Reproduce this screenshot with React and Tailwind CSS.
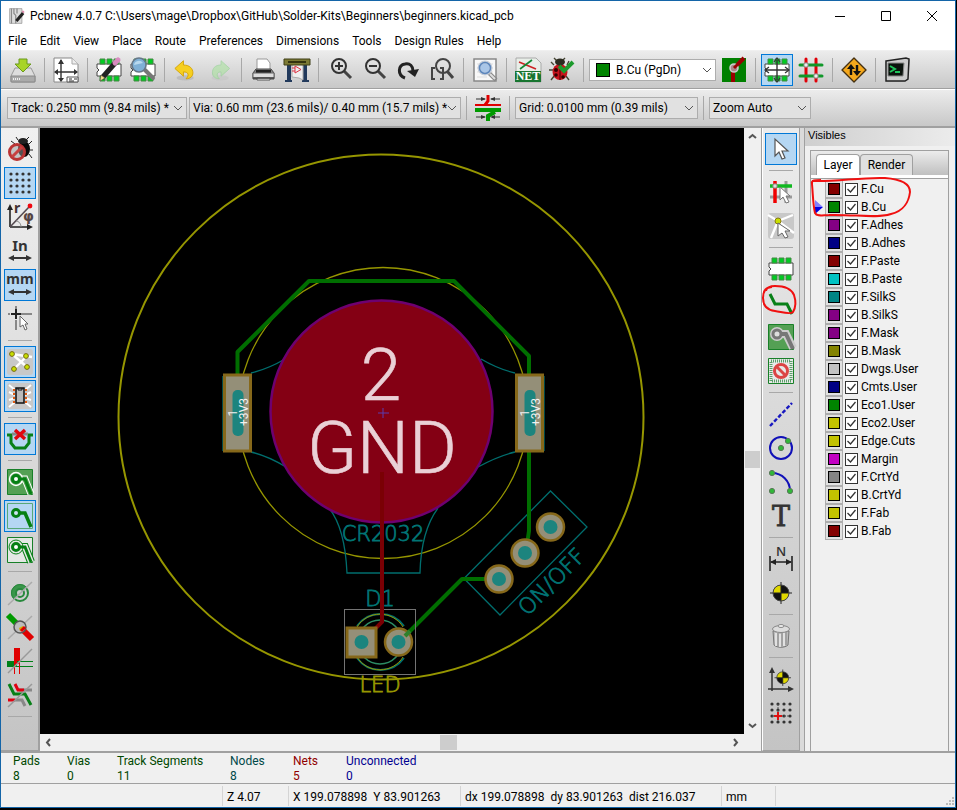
import { useState } from 'react';

const Icon = ({ children, size = 26 }) => (
    <svg width={size} height={size} viewBox="0 0 26 26" fill="none" aria-hidden="true" className="shrink-0 overflow-visible">
        {children}
    </svg>
);

/* Pieces shared by several icons */
const Chip = () => (
    <>
        <path d="M1 7h24v12H1v-4l2-2-2-2z" fill="#fff" stroke="#444" />
        <path d="M4 2h5v5H4zM11 2h5v5h-5zM18 2h5v5h-5zM4 19h5v5H4zM11 19h5v5h-5zM18 19h5v5h-5z" fill="#0c2" stroke="#484" />
    </>
);

const Magnifier = () => (
    <>
        <path d="M17 14l7 7" stroke="#444" strokeWidth="3" />
        <circle cx="12" cy="9" r="7" stroke="#333" strokeWidth="2" />
    </>
);

const Arrow = () => <path d="M7 3v17l4-4 3 7 3-1-3-7h6z" fill="#fff" stroke="#555" strokeWidth="1.2" />;

const Target = () => (
    <>
        <circle cx="13" cy="13" r="8" fill="#111" />
        <path d="M13 13V5a8 8 0 0 0-8 8zM13 13v8a8 8 0 0 0 8-8z" fill="#e0d800" />
        <path d="M13 2v22M2 13h22" stroke="#222" />
        <circle cx="13" cy="13" r="8" stroke="#444" />
    </>
);

const GridDots = () =>
    [4, 10, 16, 22].map((y) => [4, 10, 16, 22].map((x) => <circle key={`${x}-${y}`} cx={x} cy={y} r="1.6" fill="#333" />));

const DoubleArrow = () => (
    <path d="M1 20l6-3v2h12v-2l6 3-6 3v-2H7v2z" fill="#333" />
);

const icons = {
    save: (
        <>
            <path d="M5 11h16l4 8v6H1v-6z" fill="#ddd" stroke="#999" />
            <path d="M1 19h24v5a1 1 0 0 1-1 1H2a1 1 0 0 1-1-1z" fill="#aaa" stroke="#888" />
            <path d="M3 22h8" stroke="#eee" strokeDasharray="1 1" strokeWidth="2" />
            <path d="M9 2h8v5h4l-8 8-8-8h4z" fill="#a8d428" stroke="#6a9a1c" />
        </>
    ),
    page: (
        <>
            <path d="M1 1h18l6 6v18H1z" fill="#fff" stroke="#888" />
            <path d="M19 1v6h6" stroke="#aaa" fill="#eee" />
            <path d="M8 3v21M2 15h22" stroke="#333" strokeWidth="1.4" />
            <path d="M8 2l-3 5h6zM8 25l-3-4h6zM1 15l4-3v6zM25 15l-4-3v6z" fill="#333" />
            <path d="M14 20h11v5H14z" fill="#fff" stroke="#555" />
            <path d="M16 22h3m2 0h3M16 24h5" stroke="#333" />
        </>
    ),
    edit: (
        <>
            <Chip />
            <path d="M6 21L20 5" stroke="#222" strokeWidth="5" />
            <path d="M19 6l3-3" stroke="#d88abf" strokeWidth="5" strokeLinecap="round" />
            <path d="M4 24l1-6 4 3z" fill="#f4e08a" stroke="#544" strokeWidth=".6" />
        </>
    ),
    view: (
        <>
            <Chip />
            <path d="M15 13l8 8" stroke="#777" strokeWidth="4" strokeLinecap="round" />
            <circle cx="9" cy="8" r="7" fill="#7fb0d6" stroke="#678" strokeWidth="1.6" />
            <path d="M4 8a5 5 0 0 1 9-2z" fill="#b8d8ee" />
        </>
    ),
    undo: (
        <g transform="translate(1 2) scale(.86)">
            <ellipse cx="13" cy="22" rx="10" ry="3" fill="#999" opacity=".35" />
            <path d="M1 11l10-9v5c7 0 11 4 11 9 0 4-3 7-8 7 4-4 3-8-3-8v5z" fill="#f6cf20" stroke="#d2a000" />
        </g>
    ),
    redo: (
        <g opacity=".55" transform="translate(2 2) scale(.86)">
            <ellipse cx="13" cy="22" rx="10" ry="3" fill="#aaa" opacity=".3" />
            <path d="M24 11L14 2v5C7 7 4 11 4 16c0 4 3 7 8 7-4-4-3-8 2-8v5z" fill="#a6e39a" stroke="#7fce80" />
        </g>
    ),
    print: (
        <>
            <path d="M7 2h10l3 4v8H7z" fill="#fff" stroke="#999" />
            <path d="M6 12h15l3 4v6H3v-6z" fill="#888" stroke="#444" />
            <path d="M6 13h15v3H6z" fill="#222" />
            <path d="M3 16h21v5H3z" fill="#ddd" stroke="#666" />
            <path d="M7 21h13v2H7z" fill="#f8f8f8" stroke="#555" />
            <path d="M3 21h21" stroke="#444" strokeWidth="1.5" />
        </>
    ),
    plot: (
        <>
            <path d="M3 7h4v16h1v2H1v-2h2zM19 7h4v16h2v2h-7v-2h1z" fill="#223a5c" />
            <path d="M8 7h11v16l-4-2-7-1z" fill="#eee" stroke="#aaa" />
            <path d="M0 2h26v6H0z" fill="#7c7a34" stroke="#3f3e17" />
            <path d="M4 5h18" stroke="#34330f" strokeWidth="2" />
            <path d="M8 11h3M8 14h3M11 9v7l6-3.500z" stroke="#d34" />
        </>
    ),
    zoomIn: (
        <>
            <Magnifier />
            <path d="M12 5v8M8 9h8" stroke="#333" strokeWidth="2" />
        </>
    ),
    zoomOut: (
        <>
            <Magnifier />
            <path d="M8 9h8" stroke="#333" strokeWidth="2" />
        </>
    ),
    redraw: (
        <>
            <path d="M10 21C2 18 3 8 10 7c5-1 8 2 8 7" stroke="#222" strokeWidth="3" />
            <path d="M12 14l12-2-4 8z" fill="#222" />
        </>
    ),
    fit: (
        <>
            <path d="M6 11H3v11h3M11 11h3v11h-3" stroke="#444" strokeWidth="2" />
            <circle cx="14" cy="9" r="7" stroke="#444" strokeWidth="2" />
            <path d="M18 14l6 7" stroke="#444" strokeWidth="3" />
        </>
    ),
    find: (
        <>
            <path d="M2 2h22v22H2z" fill="#f8f8f8" stroke="#888" strokeWidth="1.5" />
            <path d="M5 7h16M5 11h16M5 15h16M5 20h10" stroke="#ddd" />
            <path d="M17 16l7 7" stroke="#888" strokeWidth="4" />
            <path d="M18 17l5 5" stroke="#ddd" strokeWidth="2" />
            <circle cx="13" cy="11" r="6" fill="#a9c6e8" stroke="#c4ccd8" strokeWidth="3" />
            <circle cx="13" cy="11" r="5.5" stroke="#5b86bd" strokeWidth="1.5" />
        </>
    ),
    net: (
        <>
            <path d="M1 1h20l5 5v19H1z" fill="#e8eee8" stroke="#aaa" />
            <path d="M4 5l17 7" stroke="#c22" strokeWidth="1.6" />
            <path d="M5 12l12-9" stroke="#183" strokeWidth="1.6" />
            <path d="M0 14h26v11H0z" fill="#187530" />
            <text x="13" y="23" textAnchor="middle" fill="#fff" className="font-['Liberation_Serif',serif] text-[12px] font-bold">NET</text>
        </>
    ),
    bug: (
        <>
            <path d="M5 8L2 5M5 13H0M6 18l-4 5M18 8l2-4M17 19l3 4M8 4L5 1M13 4l3-3" stroke="#443" strokeWidth="1.4" />
            <ellipse cx="11" cy="15" rx="7.5" ry="8" fill="#c8131c" />
            <ellipse cx="11" cy="5" rx="5" ry="3.5" fill="#2b2b1f" />
            <path d="M11 8v15" stroke="#400" />
            <circle cx="7" cy="13" r="2" fill="#300" />
            <circle cx="7" cy="18" r="1.8" fill="#300" />
            <circle cx="14" cy="20" r="1.8" fill="#300" />
            <path d="M10 9l5 5 9-9" stroke="#1c9a2c" strokeWidth="4" />
        </>
    ),
    layerPair: (
        <>
            <path d="M1 1h24v24H1z" fill="#008000" />
            <path d="M12 25V12L23 1" stroke="#900" strokeWidth="4" />
            <circle cx="13" cy="11" r="4" fill="#a88" stroke="#ccc" strokeWidth="1.6" />
            <path d="M13 11l8-8" stroke="#900" strokeWidth="3" />
        </>
    ),
    modeFootprint: (
        <>
            <Chip />
            <path d="M9 8h8v10H9z" fill="#fff" />
            <path d="M13 3v20M2 13h22" stroke="#333" strokeWidth="1.4" />
            <path d="M10 5l3-4 3 4M10 21l3 4 3-4M5 10l-4 3 4 3M21 10l4 3-4 3" stroke="#333" strokeWidth="1.2" />
        </>
    ),
    modeTrack: (
        <>
            <path d="M8 2v22M18 2v22" stroke="#e00008" strokeWidth="3" strokeLinecap="round" />
            <path d="M2 8h22M2 19h22" stroke="#11982a" strokeWidth="3" strokeLinecap="round" />
            <circle cx="8" cy="8" r="2.2" fill="#eee" stroke="#888" />
            <circle cx="18" cy="19" r="2.2" fill="#eee" stroke="#888" />
        </>
    ),
    router: (
        <>
            <path d="M13 1l12 12-12 12L1 13z" fill="#f5a81c" stroke="#443010" strokeWidth="1.4" strokeLinejoin="round" />
            <path d="M10 18V11M16 8v7" stroke="#111" strokeWidth="2.4" />
            <path d="M10 7l-4 5h8zM16 19l-4-5h8z" fill="#111" />
        </>
    ),
    console: (
        <>
            <path d="M1 5l21-4 4 2-2 19-4 3H2z" fill="#bbb" />
            <path d="M2 4l20-3 3 1-1 20-3 2H2z" fill="#ccc" stroke="#222" strokeWidth="1.5" />
            <path d="M4 6h16l-1 13H4z" fill="#0b130d" stroke="#888" />
            <path d="M6 9l5 3-5 3M11 15h5" stroke="#1fc45a" strokeWidth="2" />
        </>
    ),
    trackWidth: (
        <>
            <path d="M13 0v6l-3 4" stroke="#e00000" strokeWidth="3" />
            <path d="M0 10h26" stroke="#e00000" strokeWidth="2" />
            <path d="M0 15h26" stroke="#009a00" strokeWidth="4" />
            <path d="M20 17l-7 4v5" stroke="#009a00" strokeWidth="4" />
            <path d="M1 4h9M16 4h9M1 22h9M17 22h8" stroke="#333" />
            <path d="M11 4L6 2v4zM15 4l5-2v4zM11 22l-5-2v4zM15 22l5-2v4z" fill="#333" />
        </>
    ),
    drcOff: (
        <>
            <path d="M11 4L9 1M19 4l3-3M22 8l3-3M23 14h3M22 18l3 4M8 8L4 5" stroke="#222" />
            <ellipse cx="17" cy="13" rx="6" ry="8" fill="#080808" />
            <ellipse cx="16" cy="5" rx="5" ry="3" fill="#222" />
            <circle cx="10" cy="16" r="7.5" fill="#999" fillOpacity=".5" stroke="#b93434" strokeWidth="3" />
            <path d="M5 21L15 11" stroke="#c84040" strokeWidth="3" />
        </>
    ),
    grid: <GridDots />,
    polar: (
        <>
            <path d="M3 23V4M3 23h19" stroke="#222" strokeWidth="1.6" />
            <path d="M3 0L0 6h6zM26 23l-6-3v6z" fill="#222" />
            <path d="M3 23L22 3" stroke="#544a50" strokeWidth="1.6" />
            <circle cx="23" cy="2" r="2.4" fill="#f00810" />
            <path d="M9 17c3 0 5 3 5 6" stroke="#888" />
            <text x="7" y="9" fill="#433" className="font-['Noto_Sans',sans-serif] text-[14px] font-bold">r</text>
            <text x="16" y="17" fill="#544" className="font-['DejaVu_Sans',sans-serif] text-[14px] font-bold">φ</text>
        </>
    ),
    inch: (
        <>
            <text x="13" y="13" textAnchor="middle" fill="#333" className="font-['Noto_Sans',sans-serif] text-[15px] font-bold">In</text>
            <DoubleArrow />
        </>
    ),
    mm: (
        <>
            <text x="13" y="12" textAnchor="middle" fill="#333" className="font-['Noto_Sans',sans-serif] text-[14px] font-bold">mm</text>
            <DoubleArrow />
        </>
    ),
    cursor: (
        <>
            <path d="M9 0v4M9 14v10M1 8h2M14 8h11" stroke="#888" strokeWidth="2" />
            <path d="M9 3v10M4 8h10" stroke="#222" strokeWidth="2" />
            <path d="M13 10v11l3-2 2 5 2-1-2-5h3z" fill="#fff" stroke="#666" />
        </>
    ),
    ratsnest: (
        <>
            <rect width="26" height="26" rx="3" fill="#c8c8c8" />
            <path d="M5 5l20 3M5 5l15 13M7 20L20 7" stroke="#fff" strokeWidth="2.4" />
            <g fill="#c8e000" stroke="#776a10">
                <circle cx="5" cy="5" r="2.4" />
                <circle cx="19" cy="7" r="2.4" />
                <circle cx="7" cy="20" r="2.4" />
                <circle cx="20" cy="18" r="2.4" />
            </g>
        </>
    ),
    moduleRatsnest: (
        <>
            <rect width="26" height="26" rx="3" fill="#c8c8c8" />
            <path d="M2 2l6 5M2 9l6 3M2 17l6-2M2 24l6-5M24 2l-6 5M24 9l-6 3M24 17l-6-2M24 24l-6-5" stroke="#fff" strokeWidth="2" />
            <path d="M9 5h8v15H9z" fill="#bbb" stroke="#111" strokeWidth="1.5" />
            <path d="M7 6v14M19 6v14" stroke="#e05a10" strokeWidth="2" strokeDasharray="2 2" />
            <path d="M11 5v2h4V5" stroke="#111" />
        </>
    ),
    autoDelete: (
        <>
            <path d="M0 9h4v8l4 5h10l4-5V9h4" stroke="#088018" strokeWidth="3" />
            <path d="M5 8h16" stroke="#888" strokeWidth="3" />
            <path d="M8 4l10 9M18 4L8 13" stroke="#e00810" strokeWidth="3.5" />
        </>
    ),
    zoneFilled: (
        <>
            <path d="M.5.5h25v25H.5z" fill="#54a054" stroke="#188028" />
            <path d="M9 10h9l6 15" stroke="#fff" strokeWidth="7" />
            <path d="M9 10h9l6 15" stroke="#54a054" strokeWidth="5" />
            <circle cx="9" cy="10" r="6.5" fill="#54a054" stroke="#fff" strokeWidth="1.4" />
            <path d="M9 10h9l6 15" stroke="#068014" strokeWidth="3" />
            <circle cx="9" cy="10" r="3.5" fill="#fff" stroke="#068014" strokeWidth="3" />
        </>
    ),
    zoneHidden: (
        <>
            <path d="M.5.5h25v25H.5z" stroke="#58a878" />
            <path d="M9 10h9l6 14" stroke="#068014" strokeWidth="3.5" />
            <circle cx="9" cy="10" r="3.5" fill="#cde3f2" stroke="#068014" strokeWidth="3" />
        </>
    ),
    zoneOutline: (
        <>
            <path d="M.5.5h25v25H.5z" fill="#e4e8e4" stroke="#188028" />
            <path d="M9 10h9l6 15" stroke="#068014" strokeWidth="8" />
            <path d="M9 10h9l6 15" stroke="#e4e8e4" strokeWidth="6" />
            <circle cx="9" cy="10" r="7" fill="#e4e8e4" stroke="#068014" />
            <path d="M9 10h9l6 15" stroke="#068014" strokeWidth="3" />
            <circle cx="9" cy="10" r="3.5" fill="#fff" stroke="#068014" strokeWidth="3" />
        </>
    ),
    padSketch: (
        <>
            <circle cx="13" cy="13" r="8" stroke="#28883c" strokeWidth="2" />
            <path d="M7 19A8 8 0 0 1 19 7z" fill="#3a964a" stroke="#28883c" />
            <circle cx="13" cy="13" r="4" fill="#ccc" stroke="#28883c" strokeWidth="2" />
            <path d="M1 25L25 2" stroke="#aaa" strokeWidth="1.5" />
        </>
    ),
    viaSketch: (
        <>
            <path d="M1 1l9 9" stroke="#009a00" strokeWidth="6" />
            <path d="M14 14l11 11" stroke="#e00000" strokeWidth="6" />
            <path d="M1 25L25 2" stroke="#aaa" strokeWidth="1.5" />
            <circle cx="13" cy="13" r="6" fill="#bbb" fillOpacity=".9" stroke="#555" strokeWidth="1.5" />
            <path d="M12 14l4-2v4l-3 1z" fill="#d0b000" />
            <path d="M14 17l4-4" stroke="#e00000" strokeWidth="3" />
        </>
    ),
    trackSketch: (
        <>
            <path d="M0 16h10" stroke="#008018" strokeWidth="6" />
            <path d="M10 0v16" stroke="#e00000" strokeWidth="6" />
            <path d="M10 13.500h16M10 18.500h16" stroke="#008018" />
            <path d="M7.500 16v10M12.500 16v10" stroke="#e00000" />
            <path d="M1 25L25 1" stroke="#999" strokeWidth="1.5" />
        </>
    ),
    contrast: (
        <>
            <path d="M12 8h13" stroke="#888" strokeWidth="3" />
            <path d="M8 2l3 6h6" stroke="#e00010" strokeWidth="3" />
            <path d="M8 18h7l3 6" stroke="#888" strokeWidth="3" />
            <path d="M1 18h7" stroke="#e00010" strokeWidth="3" />
            <path d="M2 2l5 10h11l6 11" stroke="#088018" strokeWidth="3" />
            <path d="M1 25L25 2" stroke="#999" strokeWidth="1.5" />
        </>
    ),
    select: <Arrow />,
    highlight: (
        <>
            <path d="M18 2v22M2 18h22" stroke="#999" strokeWidth="3" />
            <path d="M7 2v22" stroke="#f00000" strokeWidth="3.5" />
            <path d="M2 7h22" stroke="#10b820" strokeWidth="3.5" />
            <circle cx="7" cy="7" r="2.2" fill="#ddd" stroke="#888" />
            <path d="M12 8v13l3-3 3 6 3-1-3-6h4z" fill="#fff" stroke="#777" />
        </>
    ),
    localRatsnest: (
        <>
            <rect width="26" height="26" rx="3" fill="#c8c8c8" />
            <path d="M10 8L0 2M10 8l15-6M10 8L3 25M10 8l16 12" stroke="#fff" strokeWidth="2.4" />
            <circle cx="10" cy="8" r="3" fill="#c8e000" stroke="#887a10" />
            <path d="M10 10v13l4-3 3 5 3-1-3-6h5z" fill="#fff" stroke="#666" />
        </>
    ),
    footprint: <Chip />,
    route: <path d="M2 4l5 10h12l5 10" stroke="#088018" strokeWidth="3" />,
    zone: (
        <>
            <path d="M.5.5h25v25H.5z" fill="#54a054" stroke="#188028" />
            <path d="M9 10h9l7 14" stroke="#ccc" strokeWidth="8" />
            <circle cx="9" cy="10" r="7" fill="#ccc" />
            <path d="M9 10h9l7 15" stroke="#777" strokeWidth="4" />
            <circle cx="9" cy="10" r="4" fill="#ddd" stroke="#777" strokeWidth="3" />
        </>
    ),
    keepout: (
        <>
            <path d="M.5.5h25v25H.5z" fill="#e8e8e8" stroke="#188028" />
            <path d="M3 3h20v20H3z" stroke="#58a068" strokeWidth="3" strokeDasharray="1 1" />
            <circle cx="13" cy="13" r="6.5" stroke="#dc4444" strokeWidth="3" />
            <path d="M9 9l8 8" stroke="#dc4444" strokeWidth="3" />
        </>
    ),
    line: <path d="M2 25L24 2" stroke="#1818c0" strokeWidth="2.4" strokeDasharray="4 2" />,
    circle: (
        <>
            <circle cx="13" cy="13" r="11" stroke="#1010b8" strokeWidth="2" />
            <circle cx="13" cy="13" r="2.6" fill="#30b838" stroke="#587858" />
            <circle cx="20" cy="6" r="2.6" fill="#30b838" stroke="#587858" />
        </>
    ),
    arc: (
        <>
            <path d="M4 4c10 0 18 8 18 18" stroke="#1010b8" strokeWidth="2" />
            <circle cx="4" cy="4" r="2.6" fill="#30b838" stroke="#587858" />
            <circle cx="4" cy="22" r="2.6" fill="#30b838" stroke="#587858" />
            <circle cx="22" cy="22" r="2.6" fill="#30b838" stroke="#587858" />
        </>
    ),
    text: <text x="13" y="23" textAnchor="middle" fill="#333" stroke="#333" strokeWidth=".8" className="font-['DejaVu_Serif',serif] text-[27px]">T</text>,
    dimension: (
        <>
            <text x="13" y="10" textAnchor="middle" fill="#333" className="font-['Open_Sans',sans-serif] text-[13px] font-semibold">N</text>
            <path d="M2 10v15M24 10v15M3 16h20" stroke="#222" strokeWidth="1.6" />
            <path d="M2 16l6-3v6zM24 16l-6-3v6z" fill="#222" />
        </>
    ),
    target: <Target />,
    trash: (
        <>
            <path d="M5 8l1 14c3 3 11 3 14 0l1-14z" fill="#bbb" stroke="#777" />
            <path d="M8 10v13M12 11v13M16 10v13" stroke="#eee" strokeWidth="1.5" />
            <path d="M10 10v13M14 10v13M18 9v13" stroke="#888" />
            <ellipse cx="13" cy="6" rx="8.5" ry="3.5" fill="#ddd" stroke="#888" />
            <ellipse cx="13" cy="3" rx="3" ry="1.5" fill="#eee" stroke="#888" />
        </>
    ),
    origin: (
        <>
            <path d="M4 25V4M0 23h22" stroke="#333" strokeWidth="1.5" />
            <path d="M4 1L1 7h6zM26 23l-6-3v6z" fill="#333" />
            <g transform="translate(5 2) scale(.75)">
                <Target />
            </g>
        </>
    ),
    gridOrigin: (
        <>
            <GridDots />
            <path d="M10 4v18M4 16h18" stroke="#555" strokeDasharray="2 1" />
            <path d="M10 12v8M6 16h8" stroke="#e01010" strokeWidth="2" />
        </>
    ),
};

const mainTools = [
    ['save', 'Save board'], null,
    ['page', 'Page settings'], null,
    ['edit', 'Footprint editor'], ['view', 'Footprint viewer'], null,
    ['undo', 'Undo'], ['redo', 'Redo'], null,
    ['print', 'Print board'], ['plot', 'Plot'], null,
    ['zoomIn', 'Zoom in'], ['zoomOut', 'Zoom out'], ['redraw', 'Redraw view'], ['fit', 'Zoom auto'], null,
    ['find', 'Find'], null,
    ['net', 'Read netlist'], ['bug', 'Design rules check'], null,
];

const modeTools = [
    ['layerPair', 'Select layer pair'], null,
    ['modeFootprint', 'Footprint mode', true], ['modeTrack', 'Track mode'], null,
    ['router', 'Freerouter'], null,
    ['console', 'Scripting console'],
];

const leftTools = [
    ['drcOff', 'Disable DRC'], ['grid', 'Show grid', true], ['polar', 'Polar coordinates'],
    ['inch', 'Units in inches'], ['mm', 'Units in millimeters', true], ['cursor', 'Cursor shape'], null,
    ['ratsnest', 'Show ratsnest', true], ['moduleRatsnest', 'Footprint ratsnest', true], null,
    ['autoDelete', 'Auto delete track', true], null,
    ['zoneFilled', 'Show filled zones'], ['zoneHidden', 'Hide filled zones', true], ['zoneOutline', 'Zone outlines'], null,
    ['padSketch', 'Pads sketch mode'], ['viaSketch', 'Vias sketch mode'], ['trackSketch', 'Tracks sketch mode'],
    ['contrast', 'High contrast mode'], null,
];

const rightTools = [
    ['select', 'Select', true], null,
    ['highlight', 'Highlight net'], ['localRatsnest', 'Local ratsnest'], null,
    ['footprint', 'Add footprints'], ['route', 'Route tracks'], ['zone', 'Add filled zones'], ['keepout', 'Add keepout areas'], null,
    ['line', 'Add graphic line'], ['circle', 'Add circle'], ['arc', 'Add arc'], ['text', 'Add text'], null,
    ['dimension', 'Add dimension'], ['target', 'Add layer alignment target'], null,
    ['trash', 'Delete items'], null,
    ['origin', 'Drill and place offset'], ['gridOrigin', 'Grid origin'],
];

const layers = [
    ['F.Cu', '#840000'], ['B.Cu', '#008400'], ['F.Adhes', '#840084'], ['B.Adhes', '#000084'],
    ['F.Paste', '#840000'], ['B.Paste', '#00c2c2'], ['F.SilkS', '#008484'], ['B.SilkS', '#840084'],
    ['F.Mask', '#840084'], ['B.Mask', '#848400'], ['Dwgs.User', '#c2c2c2'], ['Cmts.User', '#000084'],
    ['Eco1.User', '#008400'], ['Eco2.User', '#c2c200'], ['Edge.Cuts', '#c2c200'], ['Margin', '#c200c2'],
    ['F.CrtYd', '#848484'], ['B.CrtYd', '#c2c200'], ['F.Fab', '#c2c200'], ['B.Fab', '#840000'],
];

const menus = ['File', 'Edit', 'View', 'Place', 'Route', 'Preferences', 'Dimensions', 'Tools', 'Design Rules', 'Help'];

const ToolButton = ({ name, label, active }) => (
    <button
        type="button"
        aria-label={label}
        aria-pressed={!!active}
        className={`relative flex size-8 shrink-0 items-center justify-center border ${
            active ? 'border-[#0078d7] bg-[#b5d7f3]' : 'border-transparent'
        }`}
    >
        <Icon>{icons[name]}</Icon>
        {name === 'route' && (
            <svg className="absolute -top-1 -left-1.5 h-9 w-10 overflow-visible" viewBox="0 0 40 36" fill="none">
                <path d="M12 3C5 3 3 8 3 14c0 7 4 12 12 13 7 1 15 4 18 1 3-5 3-11 1-17C31 4 22 2 15 2c-5 0-9 2-9 5" stroke="#f01010" strokeWidth="2" />
            </svg>
        )}
    </button>
);

const Tools = ({ items, vertical }) =>
    items.map((item, i) =>
        item ? (
            <ToolButton key={item[0]} name={item[0]} label={item[1]} active={item[2]} />
        ) : (
            <div key={i} className={vertical ? 'my-[3px] h-px w-6 shrink-0 bg-[#a8a8a8]' : 'mx-[3px] h-6 w-px shrink-0 bg-[#a8a8a8]'} />
        )
    );

const Combo = ({ label, value, width, swatch }) => (
    <div className={`relative flex h-[22px] shrink-0 items-center border border-[#adadad] ${swatch ? 'bg-white' : 'bg-[#e1e1e1]'} ${width}`}>
        {swatch && <span className="ml-1.5 size-3.5 shrink-0 border border-black bg-[#008400]" />}
        <select aria-label={label} className={`h-full w-full appearance-none pr-3 outline-none ${swatch ? 'pl-1.5' : 'pl-[3px]'}`}>
            <option>{value}</option>
        </select>
        <svg className="pointer-events-none absolute right-[3px] h-2 w-2.5" viewBox="0 0 10 8" fill="none">
            <path d="M1 2l4 4 4-4" stroke="#555" />
        </svg>
    </div>
);

const ScrollArrow = ({ label, d }) => (
    <button type="button" aria-label={label} className="flex size-[17px] shrink-0 items-center justify-center">
        <svg width="9" height="9" viewBox="0 0 9 9" fill="none">
            <path d={d} stroke="#555" strokeWidth="2" />
        </svg>
    </button>
);

const Pad = ({ x, y }) => (
    <>
        <circle cx={x} cy={y} r="13.5" fill="#948f78" stroke="#86681a" strokeWidth="2.5" />
        <circle cx={x} cy={y} r="7" fill="#1c847e" />
    </>
);

const EdgePad = ({ x }) => (
    <>
        <rect x={x - 13} y="375" width="26" height="76" fill="#948f78" stroke="#86681a" strokeWidth="3" />
        <rect x={x - 5} y="390" width="11" height="46" rx="5" fill="#1c847e" />
        <g fill="#f0f0f0" textAnchor="middle" className="font-['Roboto',sans-serif] text-[12px]">
            <text transform={`translate(${x - 1} 413) rotate(-90)`}>1</text>
            <text transform={`translate(${x + 10} 412) rotate(-90)`}>+3V3</text>
        </g>
    </>
);

const Board = () => (
    <svg viewBox="40 128 704 606" className="block min-h-0 w-full flex-1 bg-black" fill="none" role="img" aria-label="Board layout">
        {/* Board edge and holder outline */}
        <circle cx="381" cy="417" r="262.5" stroke="#969600" strokeWidth="2" />
        <ellipse cx="383" cy="413" rx="145" ry="145.5" stroke="#969600" strokeWidth="1.3" />
        <g stroke="#006e6e" strokeWidth="1.3">
            <path d="M223 451V376M544 376v75M251 373q17-4 34-14M515 373q-17-4-34-14M251 452q17 4 35 15M515 452q-17 4-37 15" />
            <path d="M329 508q16 20 18 65h73q1-42 18-65" />
            <path d="M550.5 491L587 527l-87 88-36-36.500z" />
        </g>

        {/* Battery pad */}
        <circle cx="381.5" cy="411.5" r="111" fill="#840014" stroke="#6e0070" strokeWidth="2.5" />

        {/* Tracks */}
        <path d="M237.500 390v-38L309 281h145l75 75v175l-3 20" stroke="#006e00" strokeWidth="4" strokeLinejoin="round" />
        <path d="M499 579h-37l-63 63" stroke="#006e00" strokeWidth="4" strokeLinejoin="round" />

        <g fill="#ead0d6" stroke="#ead0d6" strokeWidth=".6" textAnchor="middle" className="font-['Roboto',sans-serif] text-[73px] font-light">
            <text x="381" y="400">2</text>
            <text x="382" y="473">GND</text>
        </g>
        <path d="M383 408v10M378 413h11" stroke="#5a3cae" />

        <g fill="#007474" stroke="#007474" strokeWidth=".8" textAnchor="middle" className="font-['DejaVu_Sans',sans-serif] text-[21px] font-extralight">
            <text x="383" y="541">CR2032</text>
            <text x="380" y="606">D1</text>
            <text transform="translate(557 587) rotate(-45)" className="text-[22px]">ON/OFF</text>
        </g>

        {/* LED */}
        <rect x="344.5" y="609.5" width="71" height="65" stroke="#747474" />
        <path d="M357 626a29 29 0 0 1 47 0M357 658a29 29 0 0 0 47 0" stroke="#006e6e" strokeWidth="2" />
        <path d="M357 627a27 27 0 0 1 46 0M357 657a27 27 0 0 0 46 0" stroke="#969600" />
        <circle cx="380" cy="642" r="22" stroke="#2c8c64" strokeWidth="1.6" />
        <path d="M382 472v150l-12 12" stroke="#7a0004" strokeWidth="4" />
        <rect x="347" y="628" width="29" height="29" fill="#948f78" stroke="#86681a" strokeWidth="3" />
        <circle cx="361.5" cy="642" r="7" fill="#1c847e" />
        <Pad x={398.5} y={642} />
        <path d="M405 636l5-5" stroke="#2e802c" strokeWidth="4" />
        <text x="380" y="692" textAnchor="middle" fill="#969600" stroke="#969600" strokeWidth=".8" className="font-['DejaVu_Sans',sans-serif] text-[21px] font-extralight">LED</text>

        <Pad x={499} y={579} />
        <Pad x={525} y={553} />
        <Pad x={550.5} y={527} />
        <EdgePad x={237.5} />
        <EdgePad x={529.5} />
    </svg>
);

const LayerRow = ({ name, color, current }) => {
    const [visible, setVisible] = useState(true);

    return (
        <li className="flex h-[18px] items-center">
            <span className="flex w-3.5 shrink-0 justify-start pl-1">
                {current && (
                    <svg width="8" height="14" viewBox="0 0 8 14">
                        <path d="M0 0v7h8z" fill="#8080ff" />
                        <path d="M0 7h8l-8 7z" fill="#0000e0" />
                    </svg>
                )}
            </span>
            <button type="button" aria-label={`${name} color`} className="flex size-[18px] shrink-0 items-center justify-center border border-[#adadad] bg-[#e1e1e1]">
                <span className="h-3 w-3 border border-black" style={{ backgroundColor: color }} />
            </button>
            <label className="ml-0.5 flex items-center gap-[3px]">
                <span className="relative flex size-[13px]">
                    <input
                        type="checkbox"
                        checked={visible}
                        onChange={() => setVisible(!visible)}
                        className="size-[13px] appearance-none border border-[#333] bg-white"
                    />
                    {visible && (
                        <svg className="pointer-events-none absolute inset-0" viewBox="0 0 13 13" fill="none">
                            <path d="M2.500 6l3 3 5-6" stroke="#333" strokeWidth="1.3" />
                        </svg>
                    )}
                </span>
                {name}
            </label>
        </li>
    );
};

const stats = [
    ['Pads', '8', 'w-[54px] text-[#004800]'],
    ['Vias', '0', 'w-[50px] text-[#004800]'],
    ['Track Segments', '11', 'w-[113px] text-[#004800]'],
    ['Nodes', '8', 'w-[63px] text-[#004848]'],
    ['Nets', '5', 'w-[53px] text-[#900000]'],
    ['Unconnected', '0', 'text-[#000090]'],
];

const App = () => (
    <div className="flex h-screen min-h-[760px] flex-col bg-black pr-px pb-0.5 font-['Roboto','Noto_Sans',sans-serif] text-[12px] leading-4 text-black">
        <div className="flex min-h-0 flex-1 flex-col border border-[#1465a8] bg-[#f0f0f0]">
            {/* Title bar */}
            <header className="flex h-[30px] shrink-0 items-center bg-white pl-2">
                <Icon size={16}>
                    <path d="M1 1h20v24H1z" fill="#ddd" stroke="#888" />
                    <path d="M4 1v24M8 1v8l3 3v13M13 1v8" stroke="#888" strokeWidth="2" />
                    <path d="M12 21L23 8" stroke="#222" strokeWidth="5" />
                    <path d="M22 7l2-2" stroke="#d8a" strokeWidth="4" />
                </Icon>
                <h1 className="ml-[5px] flex-1 truncate">Pcbnew 4.0.7 C:\Users\mage\Dropbox\GitHub\Solder-Kits\Beginners\beginners.kicad_pcb</h1>
                {[
                    ['Minimize', 'M0 5.500h10'],
                    ['Maximize', 'M.5.500h9v9h-9z'],
                    ['Close', 'M0 0l10 10M10 0L0 10'],
                ].map(([label, d]) => (
                    <button key={label} type="button" aria-label={label} className="flex h-full w-[46px] items-center justify-center">
                        <svg width="10" height="10" viewBox="0 0 10 10" fill="none">
                            <path d={d} stroke="#000" />
                        </svg>
                    </button>
                ))}
            </header>

            <nav className="flex h-5 shrink-0 items-center gap-[13px] border-b border-[#f0f0f0] bg-white pl-[7px]">
                {menus.map((menu) => (
                    <button key={menu} type="button">{menu}</button>
                ))}
            </nav>

            <div className="flex h-[38px] shrink-0 items-center gap-0.5 border-b border-[#a0a0a0] bg-linear-to-b from-[#ececec] to-[#c8c8c8] pl-1.5">
                <Tools items={mainTools} />
                <Combo label="Active layer" value="B.Cu (PgDn)" width="w-[127px]" swatch />
                <Tools items={modeTools} />
            </div>

            <div className="flex h-[39px] shrink-0 items-center gap-0.5 border-t border-b-2 border-t-white border-b-[#a0a0a0] bg-linear-to-b from-[#ececec] to-[#c8c8c8] pl-1.5">
                <Combo label="Track width" value="Track: 0.250 mm (9.84 mils) *" width="w-[180px]" />
                <Combo label="Via size" value="Via: 0.60 mm (23.6 mils)/ 0.40 mm (15.7 mils) *" width="w-[272px]" />
                <Tools items={[null, ['trackWidth', 'Auto track width'], null]} />
                <Combo label="Grid" value="Grid: 0.0100 mm (0.39 mils)" width="w-[183px]" />
                <Tools items={[null]} />
                <Combo label="Zoom" value="Zoom Auto" width="w-[102px]" />
            </div>

            <div className="flex min-h-0 flex-1">
                <aside className="flex w-[39px] shrink-0 flex-col items-center gap-0.5 border-r-2 border-b border-[#a0a0a0] bg-linear-to-b from-[#f0f0f0] to-[#c4c4c4] pt-[5px]">
                    <Tools items={leftTools} vertical />
                </aside>

                <main className="flex min-w-0 flex-1 flex-col">
                    <Board />
                    <div className="flex h-[17px] shrink-0">
                        <ScrollArrow label="Scroll left" d="M6 1L3 4.500 6 8" />
                        <div className="flex-[383]" />
                        <div className="my-px w-[17px] bg-[#cdcdcd]" />
                        <div className="flex-[270]" />
                        <ScrollArrow label="Scroll right" d="M3 1l3 3.500L3 8" />
                    </div>
                </main>

                <div className="flex w-[17px] shrink-0 flex-col pb-[17px]">
                    <ScrollArrow label="Scroll up" d="M1 6l3.500-3L8 6" />
                    <div className="flex-[306]" />
                    <div className="mx-px h-[17px] bg-[#cdcdcd]" />
                    <div className="flex-[249]" />
                    <ScrollArrow label="Scroll down" d="M1 3l3.500 3L8 3" />
                </div>

                <aside className="flex w-11 shrink-0 border-x border-[#a0a0a0] bg-[#dadada] pr-1">
                    <div className="flex flex-1 flex-col items-center gap-0.5 border-x border-b border-[#a0a0a0] border-l-white bg-linear-to-b from-[#ececec] to-[#c4c4c4] pt-[5px]">
                        <Tools items={rightTools} vertical />
                    </div>
                </aside>

                {/* Layer manager */}
                <section className="flex w-[150px] shrink-0 flex-col pr-[6px] pl-[5px]">
                    <h2 className="-mr-[6px] -ml-[5px] h-[18px] shrink-0 bg-linear-to-r from-[#cfcfcf] to-[#ececec] pl-[3px] font-['Liberation_Sans',Arial,sans-serif] text-[11px] leading-[15px]">Visibles</h2>
                    <div className="mt-1 flex min-h-0 flex-1 flex-col border border-b-0 border-[#a0a0a0]">
                        <div role="tablist" className="flex h-6 shrink-0 items-end bg-linear-to-b from-[#ececec] to-[#c0c0c0] pl-[5px]">
                            <button type="button" role="tab" aria-selected="true" className="h-[21px] w-11 rounded-t-sm border border-b-0 border-[#a0a0a0] bg-white">Layer</button>
                            <button type="button" role="tab" aria-selected="false" className="h-[21px] w-[53px] rounded-t-sm border border-b-0 border-[#a0a0a0] bg-[#e0e0e0]">Render</button>
                        </div>
                        <div className="h-1 shrink-0 border-b border-[#a0a0a0] bg-white" />
                        <ul className="relative pt-px">
                            {layers.map(([name, color]) => (
                                <LayerRow key={name} name={name} color={color} current={name === 'B.Cu'} />
                            ))}
                            <svg className="pointer-events-none absolute -top-px left-0 h-10 w-[104px] overflow-visible" viewBox="0 0 104 40" fill="none">
                                <path d="M10 2C4 2 0 2 1 6c1 11 1 21 3 29 2 4 8 2 14 2 25-1 46 4 62-1 13-3 18-13 19-22C99 5 88 1 74 0 50-1 25 4 1 3" stroke="#f01010" strokeWidth="2" />
                            </svg>
                        </ul>
                    </div>
                </section>
            </div>

            <div className="flex h-[33px] shrink-0 border-t-2 border-b border-[#a0a0a0] pt-px pl-3 leading-[15px]">
                {stats.map(([label, value, style]) => (
                    <div key={label} className={`shrink-0 whitespace-nowrap ${style}`}>
                        <div>{label}</div>
                        <div>{value}</div>
                    </div>
                ))}
            </div>

            <footer className="flex h-[23px] shrink-0 items-stretch pt-0.5 pb-px leading-[22px] whitespace-pre">
                <div className="w-[221px]" />
                <div className="w-[66px] border-l border-[#d4d4d4] pl-1">Z 4.07</div>
                <div className="w-[172px] border-l border-[#d4d4d4] pl-1">X 199.078898  Y 83.901263</div>
                <div className="w-[261px] border-l border-[#d4d4d4] pl-1">dx 199.078898  dy 83.901263  dist 216.037</div>
                <div className="w-[54px] border-l border-[#d4d4d4] pl-1">mm</div>
                <div className="flex flex-1 items-end justify-end border-l border-[#d4d4d4]">
                    <svg width="9" height="9" viewBox="0 0 9 9" fill="#bbb">
                        <path d="M6 0h2v2H6zM3 3h2v2H3zM6 3h2v2H6zM0 6h2v2H0zM3 6h2v2H3zM6 6h2v2H6z" />
                    </svg>
                </div>
            </footer>
        </div>
    </div>
);

export default App;
